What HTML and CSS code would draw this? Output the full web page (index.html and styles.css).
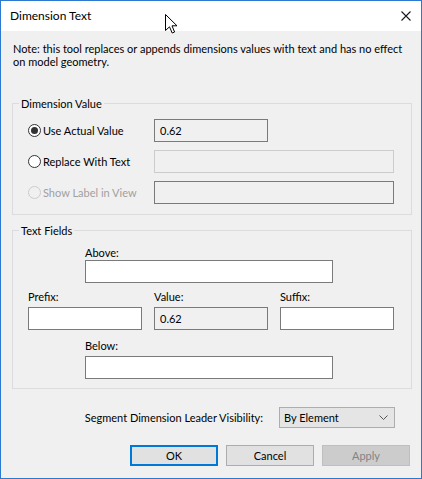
FILE: index.html
```html
<!DOCTYPE html>
<html>
<head>
<meta charset="utf-8">
<link rel="stylesheet" href="styles.css">
</head>
<body>
<div class="window">
  <div class="titlebar">
    <span class="title">Dimension Text</span>
    <svg class="close" width="10" height="10" viewBox="0 0 10 10"><path d="M0.5 0.5 L9.5 9.5 M9.5 0.5 L0.5 9.5" stroke="#1a1a1a" stroke-width="1.1" fill="none"/></svg>
  </div>
  <div class="content">
    <p class="note">Note: this tool replaces or appends dimensions values with text and has no effect on model geometry.</p>

    <div class="group g1">
      <div class="legend">Dimension Value</div>
      <div class="rows">
        <div class="row">
          <div class="radio"><span class="circle checked"></span><span>Use Actual Value</span></div>
          <div class="field ro short">0.62</div>
        </div>
        <div class="row">
          <div class="radio"><span class="circle"></span><span>Replace With Text</span></div>
          <div class="field disabled long"></div>
        </div>
        <div class="row">
          <div class="radio off"><span class="circle"></span><span>Show Label in View</span></div>
          <div class="field ro long"></div>
        </div>
      </div>
    </div>

    <div class="group g2">
      <div class="legend">Text Fields</div>
      <div class="centered first">
        <div class="lbl">Above:</div>
        <div class="field wide"></div>
      </div>
      <div class="triple">
        <div class="col"><div class="lbl">Prefix:</div><div class="field"></div></div>
        <div class="col"><div class="lbl">Value:</div><div class="field ro">0.62</div></div>
        <div class="col"><div class="lbl">Suffix:</div><div class="field"></div></div>
      </div>
      <div class="centered last">
        <div class="lbl">Below:</div>
        <div class="field wide"></div>
      </div>
    </div>

    <div class="leader">
      <span class="leader-label">Segment Dimension Leader Visibility:</span>
      <div class="select"><span>By Element</span><svg width="9" height="5" viewBox="0 0 9 5"><path d="M0.5 0.5 L4.5 4.5 L8.5 0.5" stroke="#555" stroke-width="1" fill="none"/></svg></div>
    </div>

    <div class="buttons">
      <div class="btn default">OK</div>
      <div class="btn">Cancel</div>
      <div class="btn disabled">Apply</div>
    </div>
  </div>
  <svg class="cursor" width="13" height="20" viewBox="0 0 13 20"><path d="M0.5 0.5 L0.5 16.5 L4.5 12.8 L7.2 19 L9.6 18 L7 11.8 L12 11.8 Z" fill="#fff" stroke="#000" stroke-width="1" stroke-linejoin="miter"/></svg>
</div>
</body>
</html>
```
FILE: styles.css
```css
* { box-sizing: border-box; }
html, body { margin: 0; padding: 0; }
body {
  font-family: Lato, "Liberation Sans", sans-serif;
  font-size: 11px;
  color: #000;
  background: #f0f0f0;
}
.window {
  position: relative;
  width: 422px;
  height: 479px;
  border: 1px solid #2b79d0;
  background: #f0f0f0;
  overflow: hidden;
}
.titlebar {
  height: 30px;
  background: #fff;
  display: flex;
  align-items: center;
  justify-content: space-between;
  padding: 0 10px 1px 9px;
}
.title { font-size: 12px; }
.close { display: block; }
.content {
  padding: 11px 9px 0 11px;
}
.note {
  margin: 0;
  line-height: 13px;
  padding-left: 1px;
}
.group {
  border: 1px solid #dcdcdc;
}
.g1 { margin-top: 35px; padding: 0 17px 10px 15px; }
.g2 { margin-top: 15px; padding: 0 17px 9px 15px; }
.legend {
  display: block;
  width: max-content;
  height: 15px;
  margin: -8px 0 0 -9px;
  padding: 0 2px;
  line-height: 15px;
  background: #f0f0f0;
}
.rows {
  margin-top: 8px;
  display: flex;
  flex-direction: column;
  gap: 8px;
}
.row {
  display: flex;
  align-items: center;
  height: 23px;
}
.radio {
  width: 126px;
  display: flex;
  align-items: center;
  gap: 2px;
}
.circle {
  width: 13px;
  height: 13px;
  border: 1px solid #333;
  border-radius: 50%;
  background: #fff;
  display: flex;
  align-items: center;
  justify-content: center;
  flex: none;
}
.circle.checked::after {
  content: "";
  width: 7px;
  height: 7px;
  border-radius: 50%;
  background: #333;
}
.radio.off { color: #a0a0a0; }
.radio.off .circle { border-color: #cccccc; background: #f0f0f0; }
.field {
  height: 23px;
  border: 1px solid #7a7a7a;
  background: #fff;
  padding: 0 5px;
  line-height: 21px;
}
.field.ro { background: #f0f0f0; }
.field.disabled { background: #f0f0f0; border-color: #cccccc; }
.short { width: 114px; }
.long { width: 240px; }
.centered { padding-left: 57px; }
.centered.first { margin-top: 7px; }
.centered.last { margin-top: 8px; }
.lbl { line-height: 15px; }
.last .lbl { margin-bottom: 3px; }
.field.wide { width: 248px; }
.triple {
  margin-top: 6px;
  display: grid;
  grid-template-columns: repeat(3, 114px);
  column-gap: 12px;
}
.triple .lbl { margin-bottom: 3px; }
.leader {
  margin-top: 18px;
  display: flex;
  justify-content: flex-end;
  align-items: center;
  gap: 16px;
  padding-right: 17px;
}
.select {
  width: 116px;
  height: 21px;
  border: 1px solid #adadad;
  background: #e5e5e5;
  display: flex;
  align-items: center;
  justify-content: space-between;
  padding: 0 6px 0 4px;
}
.select svg { display: block; }
.buttons {
  margin-top: 17px;
  display: flex;
  justify-content: flex-end;
  gap: 8px;
  padding-right: 2px;
}
.btn {
  width: 88px;
  height: 21px;
  border: 1px solid #adadad;
  background: #e1e1e1;
  text-align: center;
  line-height: 19px;
}
.btn.default { border: 2px solid #0078d7; line-height: 17px; }
.btn.disabled { background: #cccccc; border-color: #bfbfbf; color: #838383; }
.cursor {
  position: absolute;
  left: 164px;
  top: 13px;
}
```
